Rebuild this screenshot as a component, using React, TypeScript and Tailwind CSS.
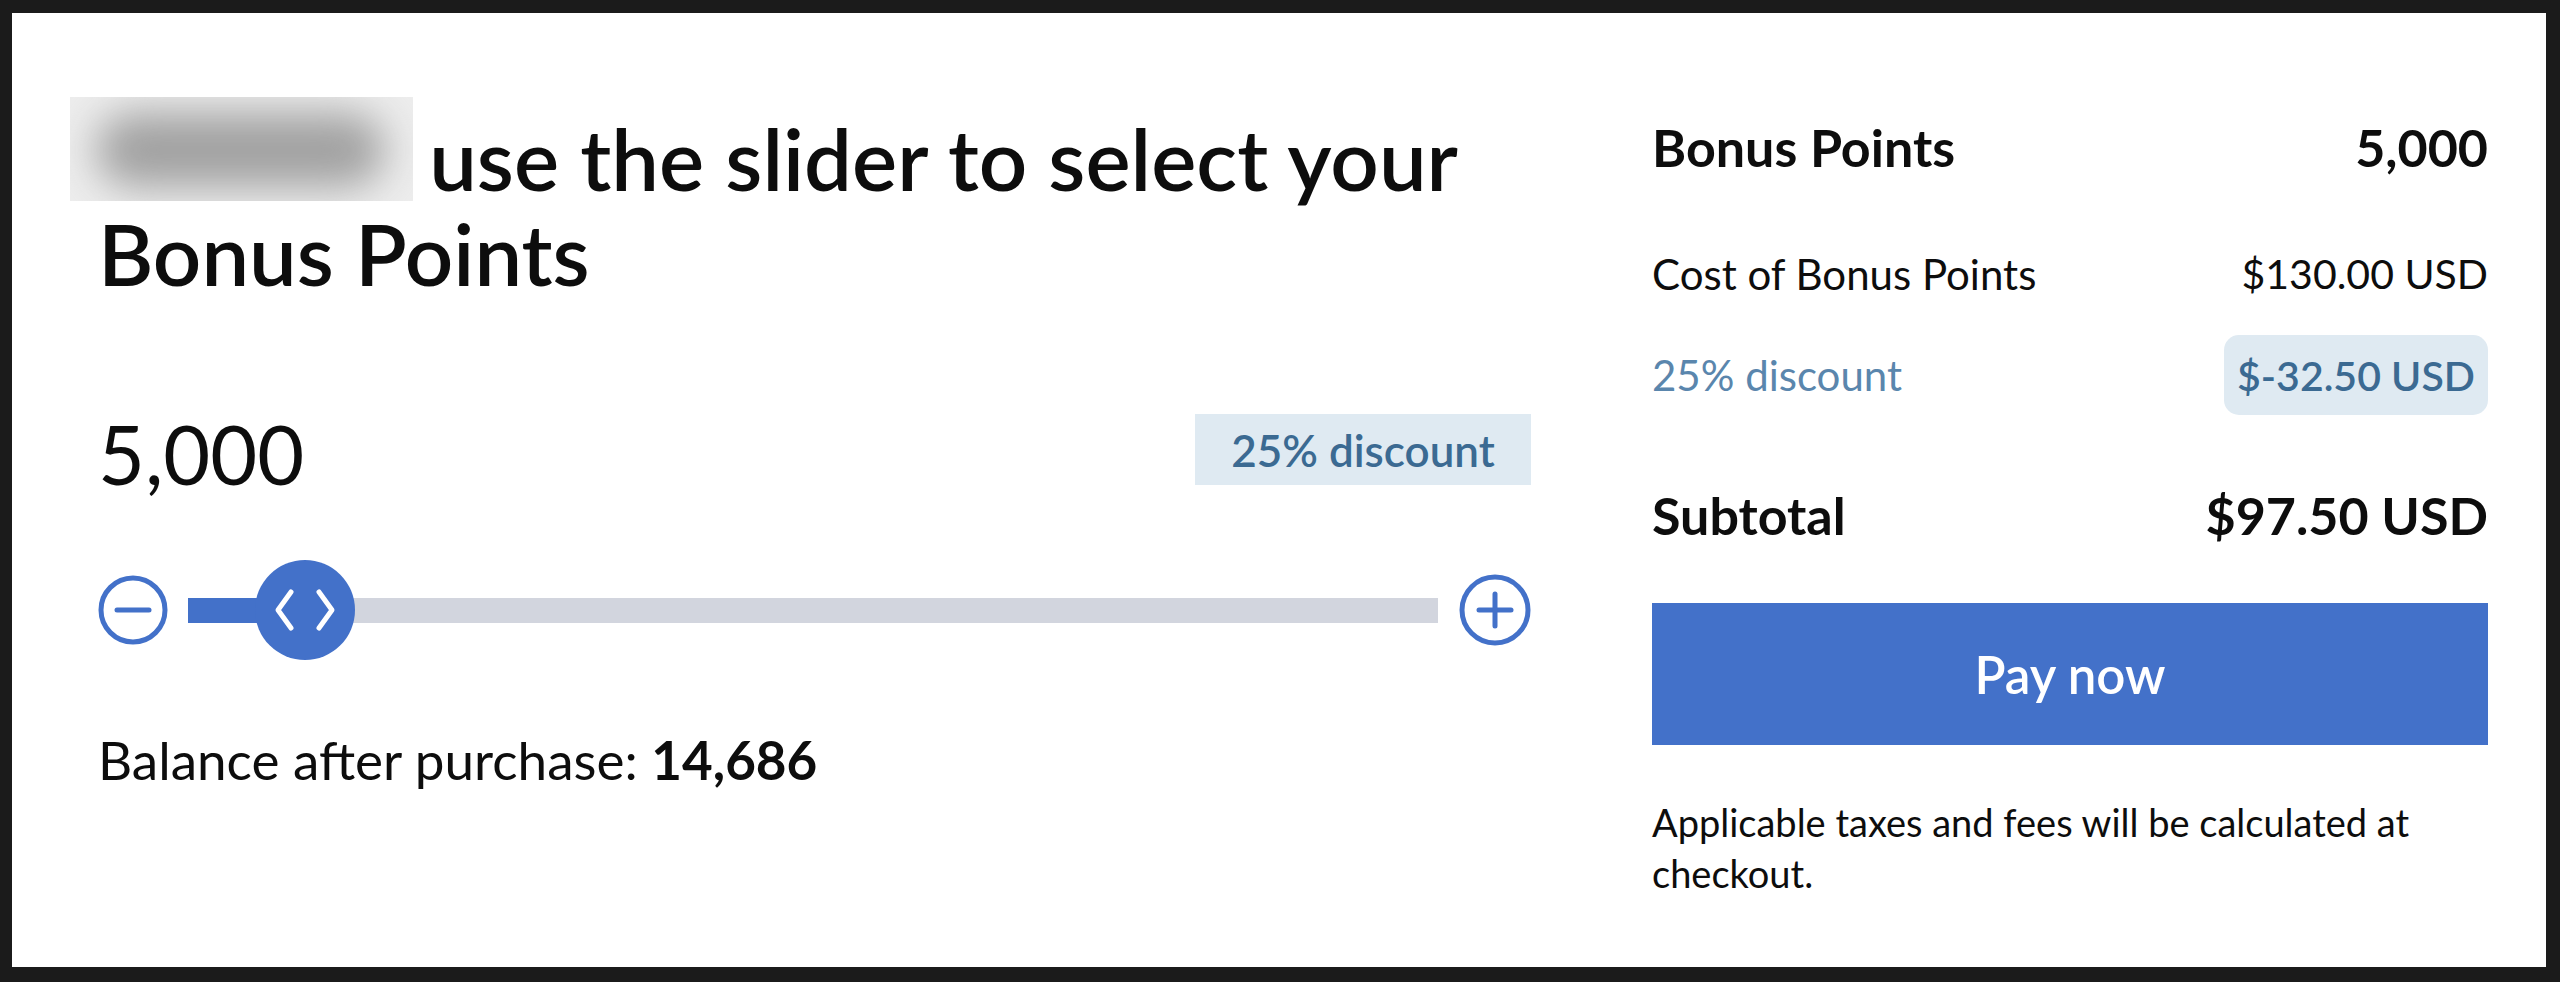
import React from 'react';

const MinusIcon = () => (
  <svg width="70" height="70" viewBox="0 0 70 70" fill="none">
    <circle cx="35" cy="35" r="32" stroke="#4371c9" strokeWidth="5" />
    <line x1="19" y1="35" x2="51" y2="35" stroke="#4371c9" strokeWidth="5" strokeLinecap="round" />
  </svg>
);

const PlusIcon = () => (
  <svg width="72" height="72" viewBox="0 0 72 72" fill="none">
    <circle cx="36" cy="36" r="33" stroke="#4371c9" strokeWidth="5" />
    <line x1="20" y1="36" x2="52" y2="36" stroke="#4371c9" strokeWidth="5" strokeLinecap="round" />
    <line x1="36" y1="20" x2="36" y2="52" stroke="#4371c9" strokeWidth="5" strokeLinecap="round" />
  </svg>
);

const Thumb = () => (
  <div className="absolute left-[67px] top-1/2 -translate-y-1/2 w-[100px] h-[100px] rounded-full bg-[#4371c9] flex items-center justify-center">
    <svg width="100" height="100" viewBox="0 0 100 100" fill="none">
      <path d="M36 32 L23 50 L36 68" stroke="#fff" strokeWidth="5" strokeLinecap="round" strokeLinejoin="round" />
      <path d="M64 32 L77 50 L64 68" stroke="#fff" strokeWidth="5" strokeLinecap="round" strokeLinejoin="round" />
    </svg>
  </div>
);

const SummaryRow = ({ label, value }: { label: string; value: string }) => (
  <div className="flex justify-between items-center">
    <span>{label}</span>
    <span>{value}</span>
  </div>
);

export default function App() {
  return (
    <div className="min-h-screen bg-[#1b1b1b] pt-[13px] pl-[12px] pr-[14px] pb-[15px] font-[Lato,sans-serif] text-[#0d0d0d]">
      <div className="bg-white h-[954px] flex pl-[86px] pr-[58px]">
        {/* left: slider */}
        <div className="w-[1433px] flex flex-col">
          <h1 className="mt-[98px] text-[85px] leading-[95px] font-semibold">
            <span className="relative inline-block align-top w-[310px] h-[95px]">
              <span className="absolute -left-[28px] -top-[14px] w-[343px] h-[104px] bg-[#ededed] overflow-hidden">
                <span className="absolute left-[26px] right-[28px] top-[16px] bottom-[14px] rounded-full bg-[#a1a1a1] blur-[20px]" />
              </span>
            </span>{' '}
            use the slider to select your
            <br />
            Bonus Points
          </h1>

          <div className="mt-[113px] flex justify-between items-start">
            <span className="text-[81px] leading-[80px] font-normal">5,000</span>
            <span className="w-[336px] h-[71px] bg-[#dfeaf2] text-[#3b6a92] text-[44px] leading-none font-semibold flex items-center justify-center">
              25% discount
            </span>
          </div>

          <div className="mt-[65px] flex items-center gap-[20px] h-[102px]">
            <MinusIcon />
            <div className="relative flex-1 h-[25px] bg-[#d2d5de] mr-[1px]">
              <div className="absolute left-0 top-0 h-full w-[117px] bg-[#4371c9]" />
              <Thumb />
            </div>
            <PlusIcon />
          </div>

          <p className="mt-[69px] text-[53px] leading-[60px]">
            Balance after purchase: <span className="font-bold">14,686</span>
          </p>
        </div>

        {/* right: summary */}
        <div className="ml-auto w-[836px] flex flex-col">
          <div className="mt-[104px] text-[52px] leading-[60px] font-bold">
            <SummaryRow label="Bonus Points" value="5,000" />
          </div>
          <div className="mt-[72px] text-[42px] leading-[50px]">
            <div className="flex justify-between items-center">
              <span>Cost of Bonus Points</span>
              <span className="text-[41px]">$130.00 USD</span>
            </div>
          </div>
          <div className="mt-[36px] h-[80px] flex justify-between items-center text-[42px] leading-none">
            <span className="text-[#5a86ad]">25% discount</span>
            <span className="h-[80px] px-[13px] rounded-[15px] bg-[#dfeaf2] text-[#3b6a92] text-[41px] font-semibold flex items-center">
              $-32.50 USD
            </span>
          </div>
          <div className="mt-[70px] text-[52px] leading-[60px] font-bold">
            <SummaryRow label="Subtotal" value="$97.50 USD" />
          </div>
          <button className="mt-[58px] h-[142px] w-full bg-[#4371c9] text-white text-[51px] font-semibold leading-none">
            Pay now
          </button>
          <p className="mt-[52px] text-[38px] leading-[51px] pr-[60px]">
            Applicable taxes and fees will be calculated at checkout.
          </p>
        </div>
      </div>
    </div>
  );
}
